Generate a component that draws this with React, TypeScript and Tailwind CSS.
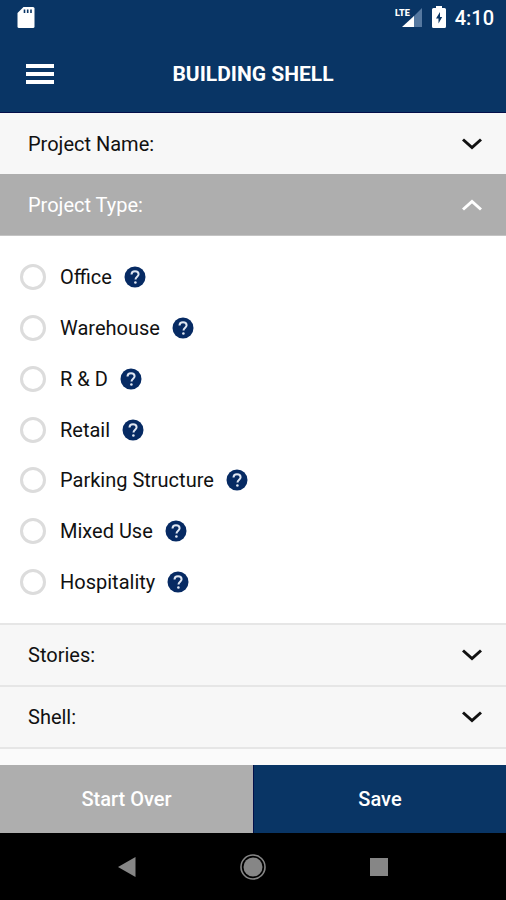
import { useState } from "react";

const projectTypes = [
  "Office",
  "Warehouse",
  "R & D",
  "Retail",
  "Parking Structure",
  "Mixed Use",
  "Hospitality",
];

function StatusBar() {
  return (
    <div className="h-9 pl-4 pr-3 flex items-center justify-between text-white">
      {/* SD card */}
      <svg width="20" height="24" viewBox="0 0 20 24" aria-hidden="true">
        <path d="M7.5 1H17a1.500 1.500 0 0 1 1.500 1.500v18A1.500 1.500 0 0 1 17 22H3a1.500 1.500 0 0 1-1.500-1.500V7Z" fill="#fff" />
        <path d="M8.500 3.500v3.500M11.700 3.500v3.500M15 3.500v3.500" stroke="#093565" strokeWidth="1.600" />
      </svg>

      <div className="flex items-center">
        {/* LTE signal */}
        <svg className="mr-2" width="28" height="24" viewBox="0 0 28 24" aria-hidden="true">
          <path d="M27 2v19h-9V11Z" fill="#5578a0" />
          <path d="M19 10v11H7Z" fill="#fff" />
          <text x="0" y="10" fontSize="9" fontWeight="900" fill="#fff">LTE</text>
        </svg>
        {/* Battery */}
        <svg className="mr-2" width="16" height="24" viewBox="0 0 16 24" aria-hidden="true">
          <path d="M5 0h6v2h2.500A1.500 1.500 0 0 1 15 3.500v17a1.500 1.500 0 0 1-1.500 1.500h-11A1.500 1.500 0 0 1 1 20.500v-17A1.500 1.500 0 0 1 2.500 2H5Z" fill="#fff" />
          <path d="M9 6 5 12.500H7.500V17.500L11.200 11H9Z" fill="#093565" />
        </svg>
        <span className="text-[20px] leading-6 font-medium">4:10</span>
      </div>
    </div>
  );
}

function Chevron({ up = false }: { up?: boolean }) {
  return (
    <svg width="20" height="12" viewBox="0 0 20 12" fill="none" stroke="currentColor" strokeWidth="3" aria-hidden="true">
      <path d={up ? "M1 10.500 10 2.500 19 10.500" : "M1 1.500 10 9.500 19 1.500"} />
    </svg>
  );
}

function SectionRow({ title }: { title: string }) {
  return (
    <button
      type="button"
      className="w-full h-[62px] pl-7 pr-6 flex items-center justify-between bg-[#f7f7f7] border-t-2 border-[#e6e6e6] text-[#111]"
    >
      <span>{title}</span>
      <Chevron />
    </button>
  );
}

function HelpIcon() {
  return (
    <svg width="22" height="22" viewBox="0 0 22 22" fill="none" aria-hidden="true">
      <circle cx="11" cy="11" r="10.500" fill="#062a63" />
      <path d="M7.500 8.500C7.500 6.300 9 5.200 11 5.200s3.600 1.200 3.600 3.100c0 2.300-3.100 2.600-3.100 5.200" stroke="#dfe6f2" strokeWidth="2" />
      <circle cx="11.400" cy="16.500" r="1.300" fill="#dfe6f2" />
    </svg>
  );
}

export default function App() {
  const [selected, setSelected] = useState("");

  return (
    <div className="min-h-screen flex flex-col bg-white font-[Roboto,sans-serif] text-[20px] leading-6">
      <header className="bg-[#093565] border-b border-[#04104a]">
        <StatusBar />
        <div className="h-[76px] px-[26px] grid grid-cols-[28px_1fr_28px] items-center text-white">
          <button type="button" aria-label="Menu" className="flex flex-col gap-1">
            <span className="h-1 w-full bg-white" />
            <span className="h-1 w-full bg-white" />
            <span className="h-1 w-full bg-white" />
          </button>
          <h1 className="text-center text-[21px] font-bold">BUILDING SHELL</h1>
        </div>
      </header>

      <main className="flex-1 flex flex-col">
        <button
          type="button"
          className="w-full h-[61px] pl-7 pr-6 flex items-center justify-between bg-[#f7f7f7] text-[#111]"
        >
          <span>Project Name:</span>
          <Chevron />
        </button>
        <button
          type="button"
          aria-expanded="true"
          className="w-full h-[62px] pl-7 pr-6 flex items-center justify-between bg-[#aeaeae] border-b border-[#c4c4c4] text-white"
        >
          <span>Project Type:</span>
          <Chevron up />
        </button>

        <div role="radiogroup" aria-label="Project Type" className="flex-1 flex flex-col py-4 pl-5">
          {projectTypes.map((type) => (
            <div key={type} className="flex-1 flex items-center text-[#111]">
              <label className="flex items-center gap-[14px]">
                <input
                  type="radio"
                  name="projectType"
                  value={type}
                  checked={selected === type}
                  onChange={() => setSelected(type)}
                  className="appearance-none size-[26px] rounded-full border-3 border-[#dcdcdc] bg-white checked:border-[#093565]"
                />
                <span>{type}</span>
              </label>
              <button type="button" aria-label={`About ${type}`} className="ml-3">
                <HelpIcon />
              </button>
            </div>
          ))}
        </div>

        <SectionRow title="Stories:" />
        <SectionRow title="Shell:" />
        <div className="h-[18px] bg-[#fafafa] border-t-2 border-[#e6e6e6]" />
      </main>

      <div className="h-[68px] grid grid-cols-2 font-medium text-white">
        <button type="button" className="bg-[#aeaeae]">Start Over</button>
        <button type="button" className="bg-[#093565] border-l border-[#04104a]">Save</button>
      </div>

      {/* Android navigation */}
      <nav className="h-[67px] px-16 grid grid-cols-3 bg-black text-[#868686]">
        <button type="button" aria-label="Back" className="grid place-items-center">
          <svg width="20" height="20" viewBox="0 0 20 20" fill="currentColor" aria-hidden="true">
            <path d="M18.500 0v20L1 10Z" />
          </svg>
        </button>
        <button type="button" aria-label="Home" className="grid place-items-center">
          <svg width="26" height="26" viewBox="0 0 26 26" fill="none" aria-hidden="true">
            <circle cx="13" cy="13" r="12" stroke="currentColor" strokeWidth="1.600" />
            <circle cx="13" cy="13" r="9.500" fill="currentColor" />
          </svg>
        </button>
        <button type="button" aria-label="Recent apps" className="grid place-items-center">
          <span className="size-[18px] bg-[#868686]" />
        </button>
      </nav>
    </div>
  );
}
